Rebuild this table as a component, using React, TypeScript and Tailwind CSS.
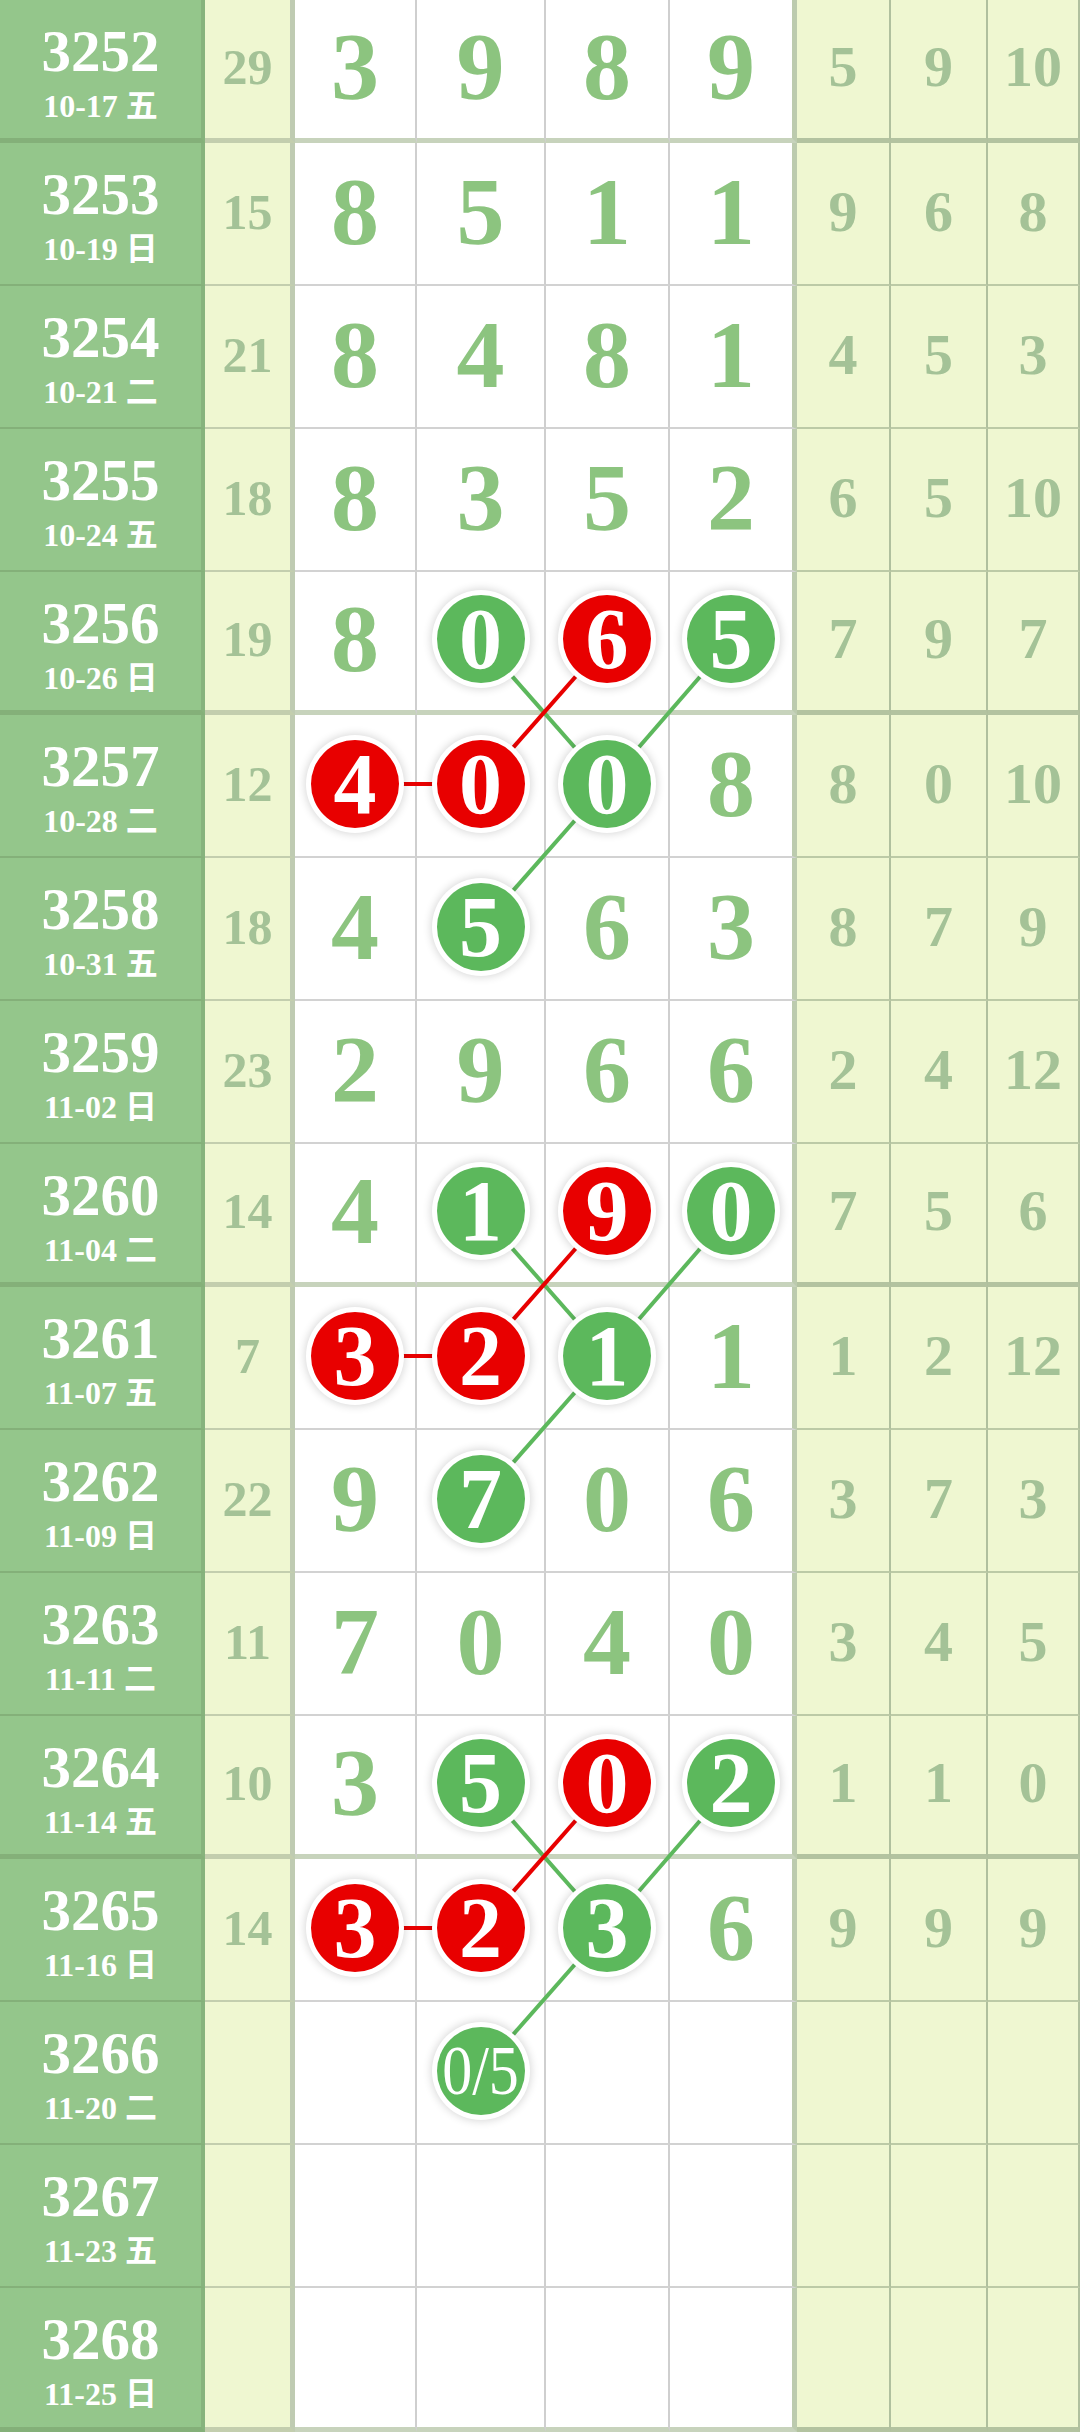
import React from 'react';

type Row = { id: string; date: string; sum: string; digits: string[]; tail: string[] };

const rows: Row[] = [
  { id: '3252', date: '10-17 五', sum: '29', digits: ['3', '9', '8', '9'], tail: ['5', '9', '10'] },
  { id: '3253', date: '10-19 日', sum: '15', digits: ['8', '5', '1', '1'], tail: ['9', '6', '8'] },
  { id: '3254', date: '10-21 二', sum: '21', digits: ['8', '4', '8', '1'], tail: ['4', '5', '3'] },
  { id: '3255', date: '10-24 五', sum: '18', digits: ['8', '3', '5', '2'], tail: ['6', '5', '10'] },
  { id: '3256', date: '10-26 日', sum: '19', digits: ['8', '0', '6', '5'], tail: ['7', '9', '7'] },
  { id: '3257', date: '10-28 二', sum: '12', digits: ['4', '0', '0', '8'], tail: ['8', '0', '10'] },
  { id: '3258', date: '10-31 五', sum: '18', digits: ['4', '5', '6', '3'], tail: ['8', '7', '9'] },
  { id: '3259', date: '11-02 日', sum: '23', digits: ['2', '9', '6', '6'], tail: ['2', '4', '12'] },
  { id: '3260', date: '11-04 二', sum: '14', digits: ['4', '1', '9', '0'], tail: ['7', '5', '6'] },
  { id: '3261', date: '11-07 五', sum: '7', digits: ['3', '2', '1', '1'], tail: ['1', '2', '12'] },
  { id: '3262', date: '11-09 日', sum: '22', digits: ['9', '7', '0', '6'], tail: ['3', '7', '3'] },
  { id: '3263', date: '11-11 二', sum: '11', digits: ['7', '0', '4', '0'], tail: ['3', '4', '5'] },
  { id: '3264', date: '11-14 五', sum: '10', digits: ['3', '5', '0', '2'], tail: ['1', '1', '0'] },
  { id: '3265', date: '11-16 日', sum: '14', digits: ['3', '2', '3', '6'], tail: ['9', '9', '9'] },
  { id: '3266', date: '11-20 二', sum: '', digits: ['', '0/5', '', ''], tail: ['', '', ''] },
  { id: '3267', date: '11-23 五', sum: '', digits: ['', '', '', ''], tail: ['', '', ''] },
  { id: '3268', date: '11-25 日', sum: '', digits: ['', '', '', ''], tail: ['', '', ''] },
];

// ball colour per row-digit cell
const balls: Record<string, 'g' | 'r'> = {
  '4-1': 'g', '4-2': 'r', '4-3': 'g', '5-0': 'r', '5-1': 'r', '5-2': 'g', '6-1': 'g',
  '8-1': 'g', '8-2': 'r', '8-3': 'g', '9-0': 'r', '9-1': 'r', '9-2': 'g', '10-1': 'g',
  '12-1': 'g', '12-2': 'r', '12-3': 'g', '13-0': 'r', '13-1': 'r', '13-2': 'g', '14-1': 'g',
};

const ROW_H = 143;
const colX = [356, 481, 607, 731];
const rowY = (r: number) => r * ROW_H + 69;

const digitW = ['w-[122px] border-r-2', 'w-[129px] border-r-2', 'w-[124px] border-r-2', 'w-[127px] border-r-[5px]'];
const digitR = ['border-r-[#cfcfcf]', 'border-r-[#cfcfcf]', 'border-r-[#cfcfcf]', 'border-r-[#bccbae]'];
const tailW = ['w-[94px]', 'w-[97px]', 'w-[92px]'];

const Ball = ({ value, color }: { value: string; color: 'g' | 'r' }) => (
  <div
    className={`relative z-10 flex h-[88px] w-[88px] items-center justify-center rounded-full shadow-[0_0_0_5px_#ffffff,0_0_8px_6px_rgba(0,0,0,0.16)] ${
      color === 'g' ? 'bg-[#5cb85c]' : 'bg-[#e80000]'
    }`}
  >
    {value.length > 1 ? (
      <span className="inline-block scale-y-[1.15] text-[60px] font-normal leading-none text-white">{value}</span>
    ) : (
      <span className="text-[86px] font-bold leading-none text-white">{value}</span>
    )}
  </div>
);

const lines = () => {
  const out: { x1: number; y1: number; x2: number; y2: number; c: string }[] = [];
  [4, 8, 12].forEach((b) => {
    const g = '#5cb85c';
    const r = '#e80000';
    out.push({ x1: colX[1], y1: rowY(b), x2: colX[2], y2: rowY(b + 1), c: g });
    out.push({ x1: colX[3], y1: rowY(b), x2: colX[2], y2: rowY(b + 1), c: g });
    out.push({ x1: colX[2], y1: rowY(b + 1), x2: colX[1], y2: rowY(b + 2), c: g });
    out.push({ x1: colX[2], y1: rowY(b), x2: colX[1], y2: rowY(b + 1), c: r });
    out.push({ x1: colX[0], y1: rowY(b + 1), x2: colX[1], y2: rowY(b + 1), c: r });
  });
  return out;
};

export default function App() {
  return (
    <div className="relative w-[1080px] bg-white font-['Liberation_Serif','Noto_Sans_CJK_SC',serif]">
      <svg className="pointer-events-none absolute left-0 top-0 z-[1]" width={1080} height={2432} viewBox="0 0 1080 2432">
        {lines().map((l, i) => (
          <line key={i} x1={l.x1} y1={l.y1} x2={l.x2} y2={l.y2} stroke={l.c} strokeWidth={4} />
        ))}
      </svg>

      {rows.map((row, ri) => {
        const thick = ri % 4 === 0;
        const bb = thick ? 'border-b-[5px]' : 'border-b-2';
        return (
          <div key={row.id} className={`flex ${ri === rows.length - 1 ? 'h-[144px]' : 'h-[143px]'}`}>
            <div className={`flex w-[205px] flex-col items-center border-r-4 border-r-[#87b37d] bg-[#94c68b] pt-[22px] text-white ${bb} border-b-[#84b079]`}>
              <span className="text-[59px] font-bold leading-none">{row.id}</span>
              <span className="mt-[9px] text-[32px] font-bold leading-none">{row.date}</span>
            </div>

            <div className={`flex w-[90px] items-center justify-center border-r-[5px] border-r-[#bfcbb2] bg-[#eff7d1] pb-1 ${bb} border-b-[#c3ceae]`}>
              <span className="text-[50px] font-bold leading-none text-[#a4c297]">{row.sum}</span>
            </div>

            {row.digits.map((d, di) => {
              const ball = balls[`${ri}-${di}`];
              return (
                <div
                  key={di}
                  className={`flex items-center justify-center bg-white pb-1 ${digitW[di]} ${digitR[di]} ${bb} ${
                    thick ? 'border-b-[#c7d3bc]' : 'border-b-[#d2d2d2]'
                  }`}
                >
                  {ball ? (
                    <Ball value={d} color={ball} />
                  ) : (
                    <span className="text-[96px] font-bold leading-none text-[#8cc47f]">{d}</span>
                  )}
                </div>
              );
            })}

            {row.tail.map((t, ti) => (
              <div
                key={ti}
                className={`flex items-center justify-center border-r-2 border-r-[#b0c09e] bg-[#eff7d1] pb-1 ${tailW[ti]} ${bb} ${
                  thick ? 'border-b-[#b3c3a0]' : 'border-b-[#bccaa6]'
                }`}
              >
                <span className="text-[58px] font-bold leading-none text-[#a4c297]">{t}</span>
              </div>
            ))}
          </div>
        );
      })}
    </div>
  );
}
